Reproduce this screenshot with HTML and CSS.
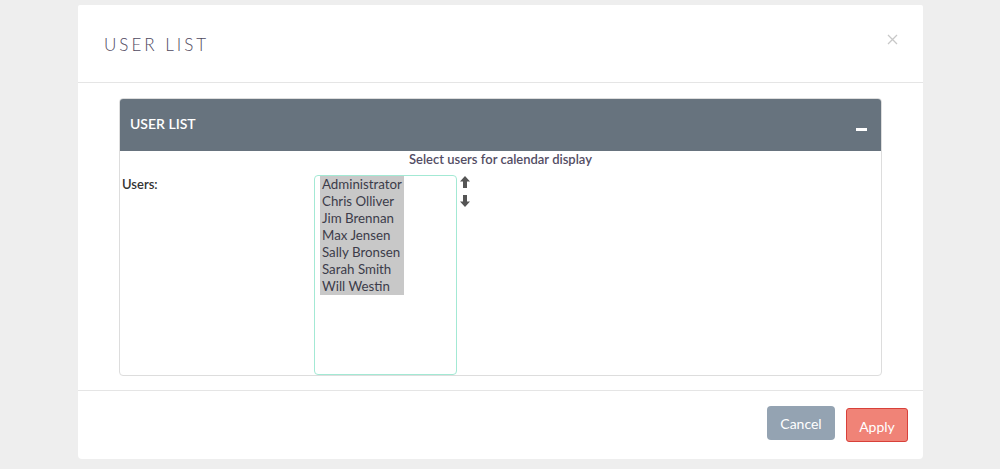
FILE: index.html
```html
<!DOCTYPE html>
<html>
<head>
<meta charset="utf-8">
<link rel="stylesheet" href="styles.css">
</head>
<body>
<div class="modal">
  <div class="modal-header">
    <h4 class="modal-title">USER LIST</h4>
    <button class="close" aria-label="Close">
      <svg width="11" height="11" viewBox="0 0 11 11"><path d="M1 1L10 10M10 1L1 10" stroke="#c8c8c8" stroke-width="1.3" fill="none"/></svg>
    </button>
  </div>
  <div class="modal-body">
    <div class="panel">
      <div class="panel-heading">
        <span class="panel-title">USER LIST</span>
        <span class="minus"></span>
      </div>
      <div class="panel-body">
        <div class="caption">Select users for calendar display</div>
        <div class="row">
          <div class="label">Users:</div>
          <div class="listbox">
            <div class="opt">Administrator</div>
            <div class="opt">Chris Olliver</div>
            <div class="opt">Jim Brennan</div>
            <div class="opt">Max Jensen</div>
            <div class="opt">Sally Bronsen</div>
            <div class="opt">Sarah Smith</div>
            <div class="opt">Will Westin</div>
          </div>
          <div class="arrows">
            <svg width="10" height="12" viewBox="0 0 10 12"><path d="M5 0L10 5.5H7V12H3V5.5H0Z" fill="#555"/></svg>
            <svg width="10" height="12" viewBox="0 0 10 12"><path d="M5 12L10 6.5H7V0H3V6.5H0Z" fill="#555"/></svg>
          </div>
        </div>
      </div>
    </div>
  </div>
  <div class="modal-footer">
    <button class="btn cancel">Cancel</button>
    <button class="btn apply">Apply</button>
  </div>
</div>
</body>
</html>
```
FILE: styles.css
```css
html, body {
  margin: 0;
  padding: 0;
  background: #eeeeee;
  font-family: Lato, "Open Sans", sans-serif;
  color: #555555;
}
.modal {
  width: 845px;
  margin: 5px 0 0 78px;
  background: #ffffff;
  border-radius: 2px 2px 4px 4px;
}
.modal-header {
  height: 77px;
  border-bottom: 1px solid #e5e5e5;
  display: flex;
  align-items: center;
  justify-content: space-between;
  padding: 0 25px 0 26px;
}
.modal-title {
  margin: 0;
  font-weight: 300;
  font-size: 17px;
  letter-spacing: 3px;
  color: #4f4960;
  padding-top: 2px;
}
.close {
  border: none;
  background: none;
  padding: 0;
  margin-top: -9px;
  display: flex;
}
.modal-body {
  padding: 15px 41px 14px 41px;
}
.panel {
  border: 1px solid #dddddd;
  border-radius: 4px;
  overflow: hidden;
}
.panel-heading {
  height: 52px;
  background: #67737e;
  display: flex;
  align-items: center;
  justify-content: space-between;
  padding: 0 14px 0 10px;
}
.panel-title {
  color: #ffffff;
  font-size: 14px;
  font-weight: 600;
  margin-top: -3px;
}
.minus {
  width: 11px;
  height: 3px;
  background: #ffffff;
  margin-top: 8px;
}
.caption {
  text-align: center;
  font-size: 13px;
  font-weight: 600;
  color: #534d64;
  line-height: 16px;
}
.row {
  display: flex;
  align-items: flex-start;
  margin-top: 8px;
}
.label {
  width: 194px;
  padding-left: 2px;
  padding-top: 1px;
  box-sizing: border-box;
  font-size: 13px;
  font-weight: 600;
  color: #333333;
  line-height: 16px;
}
.listbox {
  box-sizing: border-box;
  width: 143px;
  height: 200px;
  border: 1px solid #a3e9d4;
  border-radius: 4px;
  padding: 0 5px;
}
.opt {
  width: 84px;
  box-sizing: border-box;
  background: #c8c8c8;
  font-size: 13.3px;
  line-height: 17px;
  color: #3c3c4a;
  padding-left: 2px;
  white-space: nowrap;
}
.arrows {
  display: flex;
  flex-direction: column;
  gap: 7px;
  margin-left: 3px;
  padding-top: 1px;
}
.modal-footer {
  border-top: 1px solid #e5e5e5;
  height: 68px;
  display: flex;
  justify-content: flex-end;
  align-items: flex-start;
  padding-right: 15px;
}
.btn {
  font-family: Lato, "Open Sans", sans-serif;
  font-size: 14px;
  color: #ffffff;
  cursor: pointer;
}
.cancel {
  width: 68px;
  height: 34px;
  margin-top: 15px;
  background: #94a3b2;
  border: none;
  border-radius: 4px;
}
.apply {
  width: 62px;
  height: 34px;
  margin-top: 17px;
  margin-left: 11px;
  background: #f08377;
  border: 1px solid #d8403a;
  border-radius: 3px;
  padding-top: 3px;
}
```
